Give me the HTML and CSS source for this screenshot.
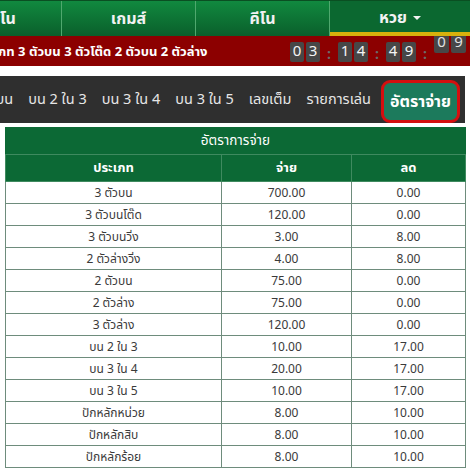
FILE: index.html
```html
<!DOCTYPE html>
<html lang="th">
<head>
<meta charset="utf-8">
<link rel="stylesheet" href="styles.css">
</head>
<body>
<nav class="topnav">
  <a class="nav-item nav-first">คาสิโน</a>
  <a class="nav-item">เกมส์</a>
  <a class="nav-item">คีโน</a>
  <a class="nav-item active">หวย <span class="caret"></span></a>
</nav>
<div class="ticker">
  <div class="marquee"><span class="marquee-text">ประเภท 3 ตัวบน 3 ตัวโต๊ด 2 ตัวบน 2 ตัวล่าง</span></div>
  <div class="countdown">
    <span class="digit">0</span><span class="digit">3</span><span class="colon">:</span>
    <span class="digit">1</span><span class="digit">4</span><span class="colon">:</span>
    <span class="digit">4</span><span class="digit">9</span><span class="colon">:</span>
    <span class="digit flip">0</span><span class="digit flip">9</span>
  </div>
</div>
<div class="tabs">
  <a class="tab">2 ตัวบน</a>
  <a class="tab">บน 2 ใน 3</a>
  <a class="tab">บน 3 ใน 4</a>
  <a class="tab">บน 3 ใน 5</a>
  <a class="tab">เลขเต็ม</a>
  <a class="tab">รายการเล่น</a>
  <a class="tab tab-active">อัตราจ่าย</a>
</div>
<table class="rates">
  <colgroup>
    <col class="c1"><col class="c2"><col class="c3">
  </colgroup>
  <thead>
    <tr><th colspan="3" class="title">อัตราการจ่าย</th></tr>
    <tr><th>ประเภท</th><th>จ่าย</th><th>ลด</th></tr>
  </thead>
  <tbody>
    <tr><td>3 ตัวบน</td><td>700.00</td><td>0.00</td></tr>
    <tr><td>3 ตัวบนโต๊ด</td><td>120.00</td><td>0.00</td></tr>
    <tr><td>3 ตัวบนวิ่ง</td><td>3.00</td><td>8.00</td></tr>
    <tr><td>2 ตัวล่างวิ่ง</td><td>4.00</td><td>8.00</td></tr>
    <tr><td>2 ตัวบน</td><td>75.00</td><td>0.00</td></tr>
    <tr><td>2 ตัวล่าง</td><td>75.00</td><td>0.00</td></tr>
    <tr><td>3 ตัวล่าง</td><td>120.00</td><td>0.00</td></tr>
    <tr><td>บน 2 ใน 3</td><td>10.00</td><td>17.00</td></tr>
    <tr><td>บน 3 ใน 4</td><td>20.00</td><td>17.00</td></tr>
    <tr><td>บน 3 ใน 5</td><td>10.00</td><td>17.00</td></tr>
    <tr><td>ปักหลักหน่วย</td><td>8.00</td><td>10.00</td></tr>
    <tr><td>ปักหลักสิบ</td><td>8.00</td><td>10.00</td></tr>
    <tr><td>ปักหลักร้อย</td><td>8.00</td><td>10.00</td></tr>
  </tbody>
</table>
</body>
</html>
```
FILE: styles.css
```css
html, body {
  margin: 0;
  padding: 0;
  background: #fff;
  overflow: hidden;
}
body {
  font-family: Tahoma, "Noto Sans Thai", "DejaVu Sans", sans-serif;
  color: #333;
}
.topnav {
  display: flex;
  height: 36px;
  background: linear-gradient(#11893f, #0a5f2b);
  border-top: 1px solid #0a4f22;
  box-sizing: border-box;
}
.nav-item {
  flex: 0 0 134px;
  display: flex;
  align-items: center;
  justify-content: center;
  color: #f2f2f2;
  font-size: 16px;
  font-weight: bold;
  border-right: 1px solid #4fa86e;
  box-sizing: border-box;
}
.nav-first {
  margin-left: -72px;
}
.nav-item.active {
  flex: 0 0 140px;
  border-right: 0;
  background: #0b6830;
  border-bottom: 4px solid #d7b10c;
  padding-top: 3px;
}
.caret {
  display: inline-block;
  width: 0;
  height: 0;
  margin-left: 6px;
  border-left: 4px solid transparent;
  border-right: 4px solid transparent;
  border-top: 4px solid #f2f2f2;
  vertical-align: middle;
}
.ticker {
  display: flex;
  align-items: center;
  height: 30px;
  background: #8c0000;
  overflow: hidden;
}
.marquee {
  flex: 0 0 290px;
  overflow: hidden;
  white-space: nowrap;
}
.marquee-text {
  display: inline-block;
  margin-left: -26px;
  color: #fff;
  font-weight: bold;
  font-size: 13px;
}
.countdown {
  display: flex;
  align-items: center;
  white-space: nowrap;
  padding-top: 2px;
}
.digit {
  display: inline-block;
  width: 14px;
  height: 20px;
  margin-right: 2px;
  background: #474747;
  border-radius: 2px;
  color: #f4f4f4;
  font-size: 15px;
  line-height: 20px;
  text-align: center;
}
.digit.flip {
  position: relative;
  top: -9px;
  width: 15px;
  color: #e0e0e0;
}
.colon {
  display: inline-block;
  width: 14px;
  color: #6a6a6a;
  font-size: 14px;
  font-weight: bold;
  text-align: center;
  margin-right: 2px;
  padding-top: 4px;
}
.tabs {
  display: flex;
  justify-content: flex-end;
  align-items: center;
  margin: 10px 5px 0 0;
  height: 47px;
  padding: 0 5px 0 0;
  background: #2f2f2f;
  overflow: hidden;
  white-space: nowrap;
  gap: 15px;
}
.tab {
  flex: 0 0 auto;
  color: #e6e6e6;
  font-size: 14.5px;
}
.tab-active {
  display: flex;
  align-items: center;
  height: 43px;
  margin-top: 4px;
  box-sizing: border-box;
  padding: 0 6px;
  background: #1c7a5c;
  border: 3px solid #d40f0f;
  border-radius: 9px;
  margin-left: -5px;
  color: #fff;
  font-size: 16px;
  font-weight: bold;
}
.rates {
  margin: 4px 0 0 5px;
  width: 460px;
  border-collapse: collapse;
  font-size: 12px;
  table-layout: fixed;
}
.rates .c1 { width: 216px; }
.rates .c2 { width: 130px; }
.rates .c3 { width: 114px; }
.rates th {
  background: #0c6935;
  color: #fff;
  font-weight: bold;
  font-size: 13px;
  height: 26px;
  line-height: 16px;
  padding: 0;
  border: 1px solid #3f8a5f;
}
.rates th.title {
  font-weight: normal;
  font-size: 13.5px;
  border-color: #0c6935 #0c6935 #3f8a5f;
}
.rates td {
  height: 21px;
  line-height: 14px;
  padding: 0;
  text-align: center;
  border: 1px solid #6e8c7c;
  color: #3a3a3a;
}
```
